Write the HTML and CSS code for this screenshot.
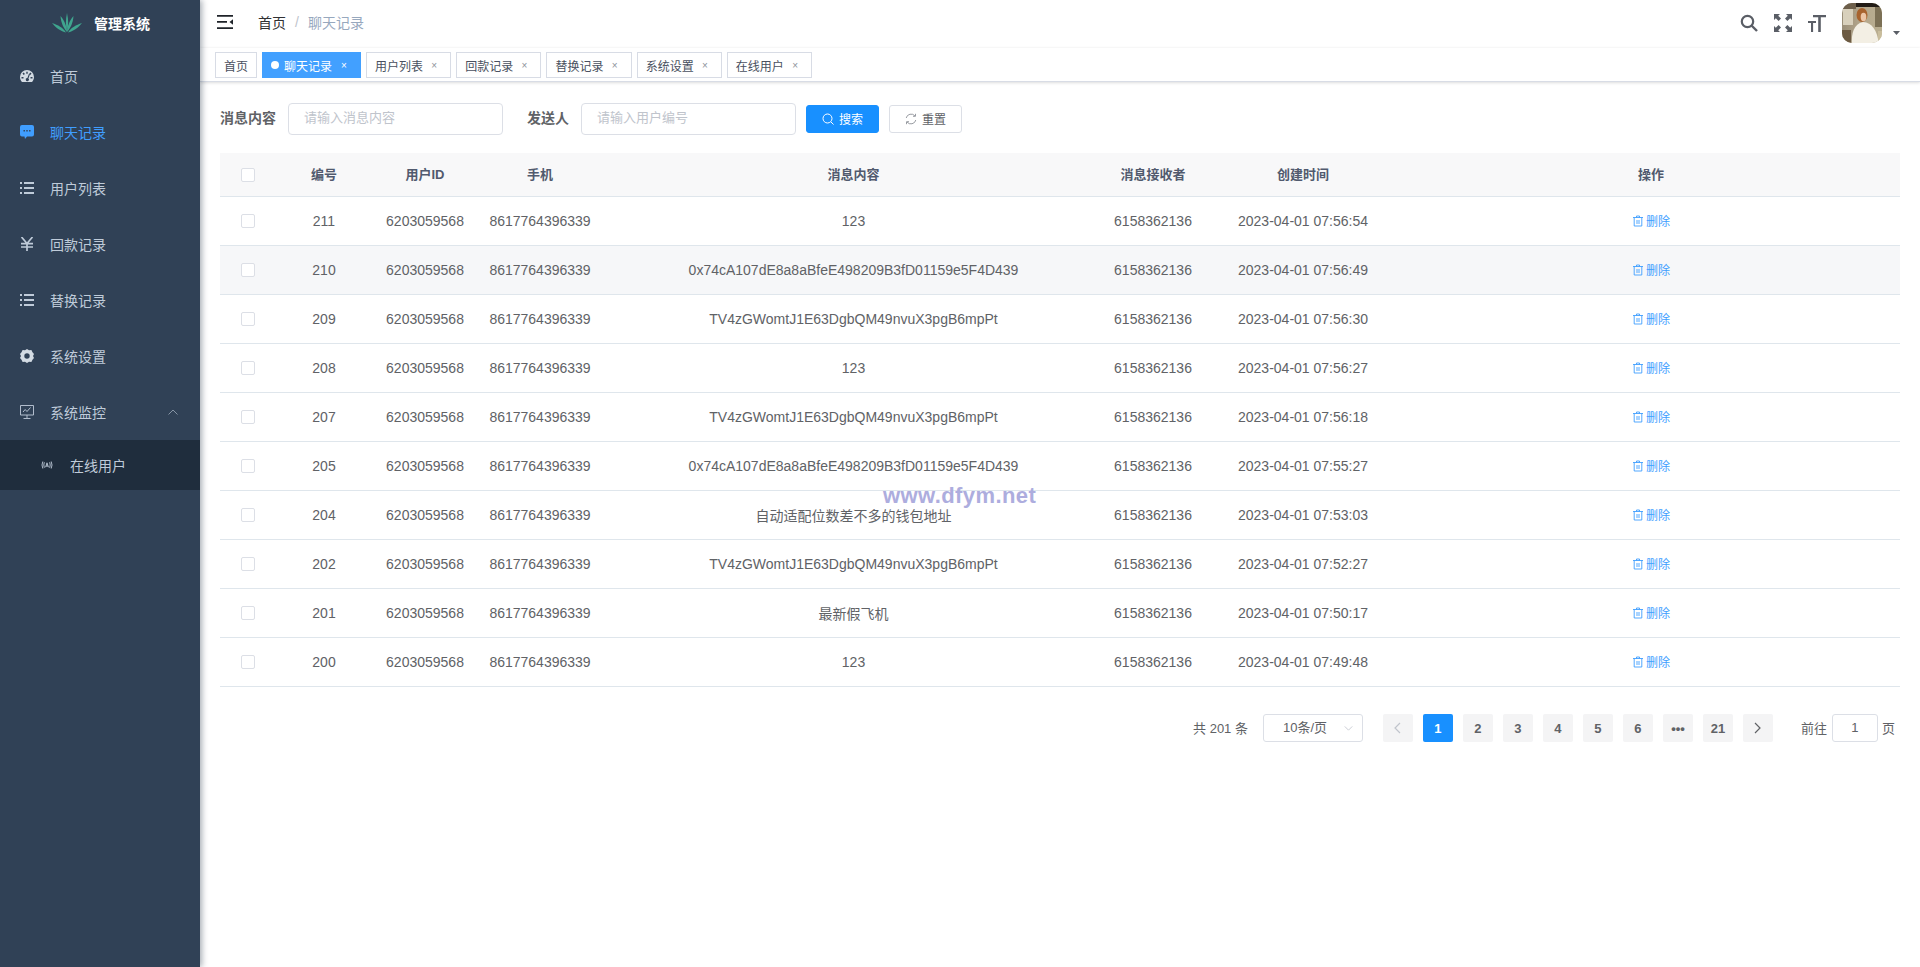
FILE: index.html
```html
<!DOCTYPE html>
<html lang="zh-CN">
<head>
<meta charset="utf-8">
<title>管理系统</title>
<link rel="stylesheet" href="styles.css">
</head>
<body>
<svg class="defs" width="0" height="0" aria-hidden="true">
  <symbol id="i-list" viewBox="0 0 14 14"><path d="M0 1h2v2H0zM4 1h10v2H4zM0 6h2v2H0zM4 6h10v2H4zM0 11h2v2H0zM4 11h10v2H4z" fill="currentColor"/></symbol>
  <symbol id="i-trash" viewBox="0 0 12 12"><path d="M1 2.500h10M4.500 2.500V1h3v1.500M2.200 2.500V11h7.600V2.500M5 5v4M7 5v4" fill="none" stroke="currentColor" stroke-width=".9"/></symbol>
</svg>
<div class="app">
  <aside class="sidebar">
    <div class="logo">
      <svg class="logo-mark" viewBox="0 0 30 20" width="30" height="20"><g fill="#3fa58e"><path d="M15 19C13.500 12 13.500 7 15 0c1.500 7 1.500 12 0 19z"/><path d="M15 19C11.500 15 9 10 8.500 3c3.500 4 6 9 6.500 16z"/><path d="M15 19c3.500-4 6-9 6.500-16-3.500 4-6 9-6.500 16z"/><path d="M14 19.500C9 18.500 4 15 0 10c6 2 11 4.500 14 9.500z"/><path d="M16 19.500c5-1 10-4.500 14-9.500-6 2-11 4.500-14 9.500z"/></g></svg>
      <span class="logo-title">管理系统</span>
    </div>
    <nav class="menu">
      <a class="menu-item"><svg class="mi" viewBox="0 0 14 12"><path fill="#d3dbe3" fill-rule="evenodd" d="M7 0a7 7 0 0 0-7 7c0 2 .8 3.700 2 5h10c1.200-1.300 2-3 2-5a7 7 0 0 0-7-7zM6.300 1.800h1.400v2H6.300zM2.500 3.500l1.200-1 1.200 1.500-1.200 1zM11.500 3.500l-1.200-1-1.200 1.500 1.200 1zM1.500 7h2v1.400h-2zM10.500 7h2v1.400h-2zM8.900 3.900l1 .5-1.500 4a1.600 1.600 0 1 1-1-.4z"/></svg><span>首页</span></a>
      <a class="menu-item active"><svg class="mi" viewBox="0 0 14 14"><path fill="currentColor" fill-rule="evenodd" d="M2 0h10a2 2 0 0 1 2 2v7.500a2 2 0 0 1-2 2H7L5 14l-.5-2.500H2a2 2 0 0 1-2-2V2a2 2 0 0 1 2-2zM3.500 5v1.400h1.400V5zM6.300 5v1.400h1.400V5zM9.100 5v1.400h1.400V5z"/></svg><span>聊天记录</span></a>
      <a class="menu-item"><svg class="mi"><use href="#i-list"/></svg><span>用户列表</span></a>
      <a class="menu-item"><svg class="mi" viewBox="0 0 14 14"><path d="M1.500 0 7 6.500 12.500 0M1 6.700h12M1 10h12M7 6.500V14" fill="none" stroke="currentColor" stroke-width="1.700"/></svg><span>回款记录</span></a>
      <a class="menu-item"><svg class="mi"><use href="#i-list"/></svg><span>替换记录</span></a>
      <a class="menu-item"><svg class="mi" viewBox="0 0 14 14"><path fill="#d3dbe3" fill-rule="evenodd" d="M7 0l2 1.200 2.400-.1 1.100 2.100 1.500 1.800-1 2 1 2-1.500 1.800-1.100 2.100-2.400-.1L7 14l-2-1.200-2.400.1-1.100-2.100L0 9l1-2-1-2 1.500-1.800 1.100-2.100 2.400.1zM7 4.300a2.700 2.700 0 1 0 0 5.400 2.700 2.700 0 0 0 0-5.400z"/></svg><span>系统设置</span></a>
      <a class="menu-item"><svg class="mi" viewBox="0 0 14 14"><path d="M.5.500h13v9.500H.5zM7 10v3M3.500 13.500h7M3 7l2.200-2.500L7 6.500 10.500 2.500" fill="none" stroke="currentColor" stroke-width=".9"/></svg><span>系统监控</span><svg class="chev" viewBox="0 0 10 6"><path d="M.5 5.500 5 1l4.500 4.500" fill="none" stroke="currentColor"/></svg></a>
      <a class="menu-sub"><svg class="mi-sub" viewBox="0 0 12 8"><path d="M1.800.5Q.2 4 1.800 7.500M3.300 1.200Q2.300 4 3.300 6.800M10.200.5Q11.800 4 10.200 7.500M8.700 1.200Q9.700 4 8.700 6.800M4.600 6.200 6 1.800l1.400 4.400M5 5h2" fill="none" stroke="currentColor" stroke-width=".9"/></svg><span>在线用户</span></a>
    </nav>
  </aside>
  <div class="content">
    <header class="navbar">
      <svg class="hamburger" viewBox="0 0 16 14" width="16" height="14"><path fill="#1f2329" d="M0 0h16v1.700H0zM0 6h10v1.700H0zM0 12.300h16V14H0zM16 4.300v5.400L12.500 7z"/></svg>
      <span class="crumb">首页</span><span class="crumb-sep">/</span><span class="crumb-cur">聊天记录</span>
      <div class="nav-right">
        <svg class="tool" viewBox="0 0 18 18"><circle cx="7.500" cy="7.500" r="5.700" fill="none" stroke="#5a5e66" stroke-width="2.200"/><path d="M11.500 11.500 17 17" stroke="#5a5e66" stroke-width="2.400"/></svg>
        <svg class="tool" viewBox="0 0 18 18"><path fill="#5a5e66" d="M0 0h6L4.200 1.800 7 4.600 4.600 7 1.800 4.200 0 6zM18 0v6l-1.800-1.800L13.400 7 11 4.600l2.800-2.800L12 0zM0 18v-6l1.800 1.800L4.600 11 7 13.400l-2.800 2.800L6 18zM18 18h-6l1.800-1.800-2.800-2.800 2.400-2.400 2.800 2.800L18 12z"/></svg>
        <svg class="tool" viewBox="0 0 18 18"><path fill="#5a5e66" d="M5 1h13v2.200h-5.200V18h-2.600V3.200H5zM0 7h8v2H5.100v9H3V9H0z"/></svg>
        <svg class="avatar" viewBox="0 0 40 40" width="40" height="40">
          <defs>
            <linearGradient id="av" x1="0" y1="0" x2="1" y2="0"><stop offset="0" stop-color="#9a8e78"/><stop offset=".5" stop-color="#b5a88d"/><stop offset="1" stop-color="#b9ae90"/></linearGradient>
            <filter id="soft" x="-10%" y="-10%" width="120%" height="120%"><feGaussianBlur stdDeviation=".5"/></filter>
          </defs>
          <rect width="40" height="40" fill="url(#av)"/>
          <g filter="url(#soft)">
            <rect x="0" y="-2" width="14" height="8" fill="#6d5f4c"/>
            <rect x="14" y="-2" width="28" height="6" fill="#241c14"/>
            <rect x="1" y="6" width="10" height="16" fill="#d8d0bc"/>
            <rect x="33" y="4" width="7" height="20" fill="#7c7054"/>
            <ellipse cx="20" cy="12" rx="5.500" ry="7" fill="#a8642f"/>
            <ellipse cx="21.500" cy="14" rx="2.800" ry="4.200" fill="#ecc5a6"/>
            <path d="M10 42c-1-12 2-21 11-23 9 1 14 7 16 23z" fill="#f3efe4"/>
            <rect x="-1" y="27" width="10" height="15" fill="#6c5a43"/>
            <rect x="36" y="28" width="5" height="14" fill="#c9bd9c"/>
          </g>
        </svg>
        <svg class="caret" viewBox="0 0 7 4" width="7" height="4"><path d="M0 0h7L3.500 4z" fill="#5a5e66"/></svg>
      </div>
    </header>
    <div class="tags">
      <span class="tag">首页</span>
      <span class="tag on"><i class="dot"></i>聊天记录<b class="x">×</b></span>
      <span class="tag">用户列表<b class="x">×</b></span>
      <span class="tag">回款记录<b class="x">×</b></span>
      <span class="tag">替换记录<b class="x">×</b></span>
      <span class="tag">系统设置<b class="x">×</b></span>
      <span class="tag">在线用户<b class="x">×</b></span>
    </div>
    <main class="main">
      <form class="search">
        <label class="lbl">消息内容</label>
        <span class="input">请输入消息内容</span>
        <label class="lbl lbl2">发送人</label>
        <span class="input">请输入用户编号</span>
        <span class="btn primary"><svg class="bi" viewBox="0 0 12 12"><circle cx="5.500" cy="5.500" r="4.500" fill="none" stroke="currentColor"/><path d="M9 9l2.500 2.500" stroke="currentColor"/></svg>搜索</span>
        <span class="btn"><svg class="bi" viewBox="0 0 12 12"><path d="M1.200 5A5 5 0 0 1 10 3M10.800 7A5 5 0 0 1 2 9M10.500.8V3.300H8M1.500 11.200V8.700H4" fill="none" stroke="#9a9da3" stroke-width="1"/></svg>重置</span>
      </form>
      <table class="grid">
        <colgroup><col class="c0"><col class="c1"><col class="c2"><col class="c3"><col class="c4"><col class="c5"><col class="c6"><col></colgroup>
        <thead><tr><th><i class="cb"></i></th><th><span class="th">编号</span></th><th><span class="th">用户ID</span></th><th><span class="th">手机</span></th><th><span class="th">消息内容</span></th><th><span class="th">消息接收者</span></th><th><span class="th">创建时间</span></th><th><span class="th">操作</span></th></tr></thead>
        <tbody>
          <tr><td><i class="cb"></i></td><td>211</td><td>6203059568</td><td>8617764396339</td><td>123</td><td>6158362136</td><td>2023-04-01 07:56:54</td><td><a class="del"><svg class="ti"><use href="#i-trash"/></svg>删除</a></td></tr>
          <tr class="hover"><td><i class="cb"></i></td><td>210</td><td>6203059568</td><td>8617764396339</td><td>0x74cA107dE8a8aBfeE498209B3fD01159e5F4D439</td><td>6158362136</td><td>2023-04-01 07:56:49</td><td><a class="del"><svg class="ti"><use href="#i-trash"/></svg>删除</a></td></tr>
          <tr><td><i class="cb"></i></td><td>209</td><td>6203059568</td><td>8617764396339</td><td>TV4zGWomtJ1E63DgbQM49nvuX3pgB6mpPt</td><td>6158362136</td><td>2023-04-01 07:56:30</td><td><a class="del"><svg class="ti"><use href="#i-trash"/></svg>删除</a></td></tr>
          <tr><td><i class="cb"></i></td><td>208</td><td>6203059568</td><td>8617764396339</td><td>123</td><td>6158362136</td><td>2023-04-01 07:56:27</td><td><a class="del"><svg class="ti"><use href="#i-trash"/></svg>删除</a></td></tr>
          <tr><td><i class="cb"></i></td><td>207</td><td>6203059568</td><td>8617764396339</td><td>TV4zGWomtJ1E63DgbQM49nvuX3pgB6mpPt</td><td>6158362136</td><td>2023-04-01 07:56:18</td><td><a class="del"><svg class="ti"><use href="#i-trash"/></svg>删除</a></td></tr>
          <tr><td><i class="cb"></i></td><td>205</td><td>6203059568</td><td>8617764396339</td><td>0x74cA107dE8a8aBfeE498209B3fD01159e5F4D439</td><td>6158362136</td><td>2023-04-01 07:55:27</td><td><a class="del"><svg class="ti"><use href="#i-trash"/></svg>删除</a></td></tr>
          <tr><td><i class="cb"></i></td><td>204</td><td>6203059568</td><td>8617764396339</td><td>自动适配位数差不多的钱包地址</td><td>6158362136</td><td>2023-04-01 07:53:03</td><td><a class="del"><svg class="ti"><use href="#i-trash"/></svg>删除</a></td></tr>
          <tr><td><i class="cb"></i></td><td>202</td><td>6203059568</td><td>8617764396339</td><td>TV4zGWomtJ1E63DgbQM49nvuX3pgB6mpPt</td><td>6158362136</td><td>2023-04-01 07:52:27</td><td><a class="del"><svg class="ti"><use href="#i-trash"/></svg>删除</a></td></tr>
          <tr><td><i class="cb"></i></td><td>201</td><td>6203059568</td><td>8617764396339</td><td>最新假飞机</td><td>6158362136</td><td>2023-04-01 07:50:17</td><td><a class="del"><svg class="ti"><use href="#i-trash"/></svg>删除</a></td></tr>
          <tr><td><i class="cb"></i></td><td>200</td><td>6203059568</td><td>8617764396339</td><td>123</td><td>6158362136</td><td>2023-04-01 07:49:48</td><td><a class="del"><svg class="ti"><use href="#i-trash"/></svg>删除</a></td></tr>
        </tbody>
      </table>
      <div class="pager">
        <span class="total">共 201 条</span>
        <span class="select">10条/页<svg class="sel-arrow" viewBox="0 0 10 6"><path d="M.5.500 5 5 9.500.5" fill="none" stroke="currentColor"/></svg></span>
        <span class="pg dim"><svg class="pa" viewBox="0 0 7 12"><path d="M6 1 1 6l5 5" fill="none" stroke="currentColor" stroke-width="1.200"/></svg></span>
        <span class="pg cur">1</span><span class="pg">2</span><span class="pg">3</span><span class="pg">4</span><span class="pg">5</span><span class="pg">6</span><span class="pg">•••</span><span class="pg">21</span>
        <span class="pg"><svg class="pa" viewBox="0 0 7 12"><path d="M1 1l5 5-5 5" fill="none" stroke="currentColor" stroke-width="1.200"/></svg></span>
        <span class="goto">前往</span><span class="jump">1</span><span class="page-unit">页</span>
      </div>
    </main>
    <div class="watermark">www.dfym.net</div>
  </div>
</div>
</body>
</html>
```
FILE: styles.css
```css
* { box-sizing: border-box; }
html, body { margin: 0; height: 100%; }
body { font-family: "Liberation Sans", "Noto Sans CJK SC", sans-serif; font-size: 14px; color: #606266; background: #fff; overflow: hidden; }
.defs { position: absolute; }
.app { display: flex; height: 967px; }
.sidebar { width: 200px; flex: none; background: #304156; box-shadow: 2px 0 6px rgba(0, 21, 41, .35); position: relative; z-index: 2; }
.logo { height: 48px; display: flex; align-items: center; padding: 0 0 2px 52px; }
.logo-mark { margin-right: 12px; }
.logo-title { color: #fff; font-weight: 700; font-size: 14px; }
.menu { display: flex; flex-direction: column; }
.menu-item { height: 56px; display: flex; align-items: center; padding-left: 20px; color: #bfcbd9; }
.menu-item.active { color: #409eff; }
.mi { width: 14px; height: 14px; margin-right: 16px; flex: none; }
.chev { width: 10px; height: 6px; margin-left: 62px; opacity: .6; }
.menu-sub { height: 50px; display: flex; align-items: center; padding-left: 41px; background: #1f2d3d; color: #bfcbd9; }
.mi-sub { width: 12px; height: 8px; margin-right: 17px; }
.content { flex: 1; min-width: 0; position: relative; }
.navbar { height: 48px; display: flex; align-items: center; padding: 0 0 4px 17px; color: #303133; }
.hamburger { margin-right: 25px; }
.crumb { color: #303133; }
.crumb-sep { color: #c0c4cc; margin: 0 9px; }
.crumb-cur { color: #97a8be; }
.nav-right { margin-left: auto; display: flex; align-items: center; }
.tool { width: 18px; height: 18px; margin: 2px 16px 0 0; }
.avatar { border-radius: 10px; margin: 2px 11px 0 0; }
.caret { align-self: flex-end; margin: 0 20px 8px 0; }
.tags { height: 34px; display: flex; align-items: flex-start; gap: 5px; padding: 4px 0 0 15px; background: #fff; border-bottom: 1px solid #d8dce5; box-shadow: 0 1px 3px rgba(0, 0, 0, .12), 0 0 3px rgba(0, 0, 0, .04); }
.tag { height: 26px; display: flex; align-items: center; padding: 0 8px; border: 1px solid #d8dce5; font-size: 12px; color: #495060; }
.tag.on { background: #42a0ff; border-color: #42a0ff; color: #fff; }
.dot { width: 8px; height: 8px; border-radius: 50%; background: #fff; margin-right: 5px; }
.x { width: 16px; margin-left: 3.200px; text-align: center; font-weight: 400; color: #8e939b; font-size: 10px; }
.on .x { color: #fff; }
.tag.on .x { margin-left: 4px; }
.main { padding: 21px 20px 0; }
.search { display: flex; align-items: center; height: 32px; margin-bottom: 18px; }
.lbl { font-weight: 700; color: #606266; margin: -5px 12px 0 0; }
.lbl2 { margin-left: 24px; }
.input { width: 215px; height: 32px; border: 1px solid #dcdfe6; border-radius: 4px; padding-left: 15px; line-height: 28px; font-size: 13px; color: #c0c4cc; }
.btn { width: 73px; height: 28px; margin-left: 10px; border: 1px solid #dcdfe6; border-radius: 3px; display: flex; align-items: center; justify-content: center; font-size: 12px; color: #606266; padding-bottom: 1px; }
.btn.primary { margin-left: 10px; background: #1890ff; border-color: #1890ff; color: #fff; }
.bi { width: 12px; height: 12px; margin-right: 5px; }
.grid { width: 1680px; border-collapse: separate; border-spacing: 0; table-layout: fixed; }
.c0 { width: 55px; } .c1 { width: 98px; } .c2 { width: 104px; } .c3 { width: 126px; } .c4 { width: 501px; } .c5 { width: 98px; } .c6 { width: 202px; }
.grid th, .grid td { padding: 0; text-align: center; border-bottom: 1px solid #dfe6ec; white-space: nowrap; }
.grid th { height: 44px; background: #f8f8f9; color: #515a6e; font-weight: 700; font-size: 13px; }
.grid th:last-child, .grid td:last-child { padding-right: 2px; }
.th { display: block; margin-top: -3px; }
.grid td { height: 49px; color: #606266; }
.hover td { background: #f6f7f9; }
.cb { display: block; margin: 0 auto; width: 14px; height: 14px; border: 1px solid #dcdfe6; border-radius: 2px; background: #fff; }
.del { color: #409eff; font-size: 12px; display: inline-flex; align-items: center; }
.ti { width: 12px; height: 12px; margin-right: 2px; }
.pager { display: flex; align-items: center; height: 28px; margin-top: 27px; padding-right: 5px; justify-content: flex-end; font-size: 13px; color: #606266; }
.total { margin-right: 15px; padding-bottom: 2px; }
.select { width: 100px; height: 28px; border: 1px solid #dcdfe6; border-radius: 3px; padding-left: 19px; line-height: 26px; position: relative; margin-right: 20px; color: #606266; }
.sel-arrow { position: absolute; right: 9px; top: 11px; width: 9px; height: 5px; color: #c0c4cc; }
.pg { width: 30px; height: 28px; margin-right: 10px; background: #f4f4f5; border-radius: 2px; display: flex; align-items: center; justify-content: center; font-weight: 700; color: #606266; }
.pg.cur { background: #1890ff; color: #fff; }
.pg.dim { color: #c0c4cc; }
.pa { width: 7px; height: 12px; }
.goto { margin-left: 18px; margin-right: 5px; padding-bottom: 2px; }
.jump { width: 46px; height: 28px; border: 1px solid #dcdfe6; border-radius: 3px; text-align: center; line-height: 26px; margin-right: 4px; }
.page-unit { padding-bottom: 2px; }
.watermark { position: absolute; left: 683px; top: 483px; font: 700 22px "Liberation Sans", sans-serif; letter-spacing: .4px; color: #adadde; white-space: nowrap; }
```
